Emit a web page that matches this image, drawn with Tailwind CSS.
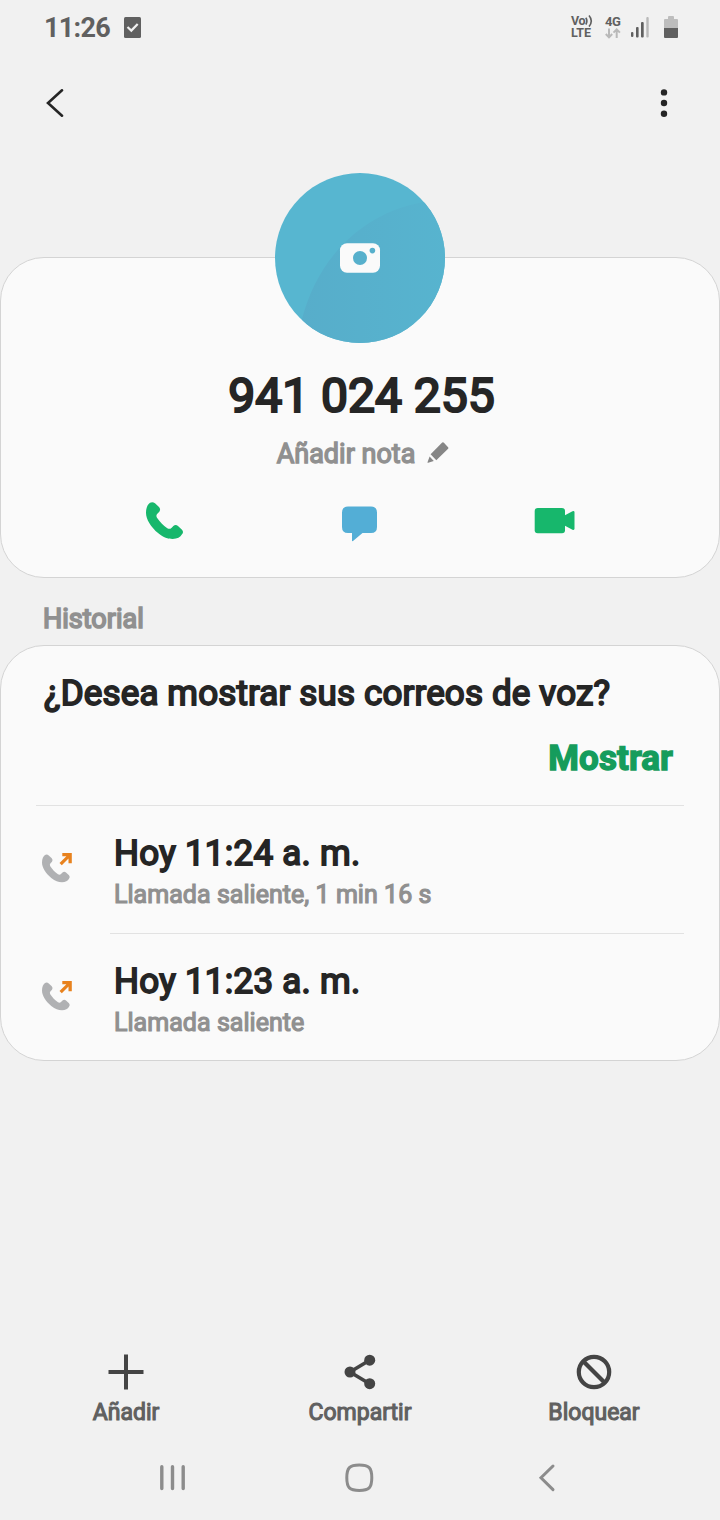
<!DOCTYPE html>
<html lang="es">
<head>
    <meta charset="UTF-8">
    <meta name="viewport" content="width=device-width, initial-scale=1.0">
    <title>Contacto</title>
    <!-- Tailwind CSS CDN -->
    <script src="https://cdn.jsdelivr.net/npm/@tailwindcss/browser@4"></script>
</head>
<body class="w-[720px] h-[1520px] overflow-hidden flex flex-col bg-[#f1f1f1] text-[#252525] font-['Roboto',sans-serif] whitespace-nowrap">
    <!-- Status bar -->
    <div class="h-14 shrink-0 flex items-center justify-between pl-11 pr-[42px] text-[#606060]">
        <div class="flex items-center gap-[14px]">
            <span class="text-[27px] leading-[54px] font-bold tracking-[-0.7px]">11:26</span>
            <svg class="w-[17px] h-[21px] -mt-[2px]" viewBox="0 0 17 21">
                <rect width="17" height="21" rx="1.5" fill="#606060"/>
                <path d="M3.5 10 7.3 13.6 13.7 7" fill="none" stroke="#f1f1f1" stroke-width="2.2"/>
            </svg>
        </div>
        <div class="flex items-center -mt-[2px]">
            <div class="w-[34px] flex flex-col text-[12.5px] leading-[12px] font-bold">
                <span class="flex items-center tracking-[-0.5px]">Vo<svg class="w-[8px] h-[12px]" viewBox="0 0 8 12" fill="none" stroke="#606060" stroke-width="1.6"><path d="M.8 2.800Q3 6 .8 9.500M4 .6Q8.600 6 4 11.600"/></svg></span>
                <span>LTE</span>
            </div>
            <div class="w-[26px] flex flex-col text-[13px] leading-[12px] font-bold">
                <span class="tracking-[-0.4px]">4G</span>
                <svg class="w-[16px] h-[11px]" viewBox="0 0 16 11" fill="none" stroke="#b9b9b9" stroke-width="2">
                    <path d="M4 .5V9M.8 6 4 9.4 7.2 6M11.7 10V1.5M8.5 4.6 11.7 1.4 14.9 4.6"/>
                </svg>
            </div>
            <svg class="w-[18px] h-[21px] mr-[15px]" viewBox="0 0 18 21">
                <rect y="15" width="2.4" height="5" rx="1" fill="#606060"/>
                <rect x="5" y="10" width="2.6" height="10.5" rx="1" fill="#606060"/>
                <rect x="10" y="5" width="2.7" height="15.5" rx="1" fill="#606060"/>
                <rect x="15.3" width="2.4" height="20.5" rx="1" fill="#b9b9b9"/>
            </svg>
            <svg class="w-[14px] h-[23px]" viewBox="0 0 14 23">
                <path d="M4 1q0-1 1-1h4q1 0 1 1v2h3q1 0 1 1v8H0V4q0-1 1-1h3z" fill="#bdbdbd"/>
                <path d="M0 12h14v9q0 1-1 1H1q-1 0-1-1z" fill="#606060"/>
            </svg>
        </div>
    </div>

    <!-- Toolbar -->
    <div class="h-[94px] shrink-0 flex items-center justify-between pl-[46px] pr-[52px]">
        <svg class="w-[18px] h-[28px]" viewBox="0 0 18 28"><path d="M16 1.3 2 14 16 26.7" fill="none" stroke="#252525" stroke-width="2.6" stroke-linecap="round"/></svg>
        <svg class="w-[8px] h-[28px]" viewBox="0 0 8 28" fill="#252525"><circle cx="4" cy="3.4" r="3.2"/><circle cx="4" cy="14" r="3.2"/><circle cx="4" cy="24.7" r="3.2"/></svg>
    </div>

    <!-- Contact card -->
    <section class="mt-[107px] h-[321px] shrink-0 flex flex-col items-center bg-[#fafafa] border border-[#d4d4d4] rounded-[44px]">
        <svg class="-mt-[85px] w-[170px] h-[170px] shrink-0" viewBox="0 0 170 170">
            <defs>
                <clipPath id="avatar"><circle cx="85" cy="85" r="85"/></clipPath>
                <linearGradient id="shade"><stop offset="0" stop-color="#57adca"/><stop offset="1" stop-color="#57b4cf"/></linearGradient>
            </defs>
            <g clip-path="url(#avatar)">
                <rect width="170" height="170" fill="#57b6d0"/>
                <path d="M27 146C42 88 84 42 144 30L175 24V175H20Z" fill="url(#shade)"/>
            </g>
            <rect x="65" y="70.3" width="40" height="29.5" rx="7" fill="#fafafa"/>
            <circle cx="85" cy="85" r="7" fill="#57b0cc"/>
            <circle cx="97.4" cy="77.6" r="2.8" fill="#57b0cc"/>
        </svg>
        <h1 class="mt-[25px] pl-[3px] text-[48px] leading-[56px] font-normal [-webkit-text-stroke:2.2px_#252525]">941 024 255</h1>
        <div class="mt-[11px] h-9 flex items-center gap-3 pl-[6px] text-[27px] text-[#909090] [-webkit-text-stroke:1.4px_#909090]">
            <span class="pt-[2px]">Añadir nota</span>
            <svg class="w-[22px] h-[22px] stroke-0" viewBox="0 0 22 22" fill="#868686"><path d="M15.2.6q.9-.7 1.700.1l4.200 4.500q.7.8 0 1.500L9.300 18.200 3.600 12.200ZM2.600 14.500 6.800 19 1.200 20.800Q.2 21 .6 20Z"/></svg>
        </div>
        <div class="mt-[31px] w-full flex pl-[145px]">
            <svg class="w-[37px] h-[37px]" viewBox="0 0 111 111" fill="#17b76c"><path id="handset" d="M0 32C0 17 5 7 12 2Q20-2 27 4L39 15Q45 21 40 29L34 35Q29 40 33 47C42 60 51 70 64 79Q71 83 77 77L82 72Q89 66 96 72L108 83Q114 90 108 97C103 106 94 111 80 111C65 111 53 107 37 94C14 74 0 52 0 32Z"/></svg>
            <svg class="ml-[159px] mt-[4px] w-[35px] h-[36px]" viewBox="0 0 35 36" fill="#53aed6"><path d="M6 .5H29Q35 .5 35 6.500V21Q35 27 29 27H20.500L11 35Q10 35.500 10 34.500V27H6Q0 27 0 21V6.500Q0 .5 6 .5Z"/></svg>
            <svg class="ml-[157px] mt-[5px] w-[41px] h-[27px]" viewBox="0 0 41 27" fill="#17b76c"><rect x=".7" y="1" width="30.3" height="25.2" rx="3"/><path d="M30.500 8.500 38.500 4.200Q40.500 3.500 40.500 5.500V21.500Q40.500 23.500 38.500 22.800L30.500 18.500Z"/></svg>
        </div>
    </section>

    <h2 class="h-[67px] shrink-0 pl-[43px] pt-[23px] text-[27px] leading-9 text-[#909090] font-normal [-webkit-text-stroke:1.7px_#909090]">Historial</h2>

    <!-- Call history -->
    <section class="h-[416px] shrink-0 flex flex-col bg-[#fafafa] border border-[#d4d4d4] rounded-[44px]">
        <div class="h-40 shrink-0 mx-[35px] pl-[7px] pr-[11px] flex flex-col border-b border-[#e2e2e2]">
            <p class="mt-[28px] pl-[1px] text-[35px] leading-10 tracking-[0.13px] [-webkit-text-stroke:1.8px_#252525]">¿Desea mostrar sus correos de voz?</p>
            <button class="mt-[25px] self-end text-[35px] leading-10 font-bold text-[#159c5c] tracking-[0.1px] [-webkit-text-stroke:1.4px_#159c5c]">Mostrar</button>
        </div>
        <div class="h-32 shrink-0 flex">
            <svg class="ml-[41px] mt-[47px] w-[31px] h-[30px]" viewBox="0 0 31 30"><use href="#handset" transform="translate(0 1.5) scale(.25)" fill="#b0b1b3"/><path d="M20.300 0H29.800V10.300H26.500V5.600L19.800 12.300 17.500 10 24.400 3.300H20.300Z" fill="#e8821e"/></svg>
            <div class="ml-[37px] mr-[35px] pl-[4px] flex-1 flex flex-col border-b border-[#e2e2e2]">
                <span class="mt-[28px] text-[35px] leading-10 tracking-[0.25px] [-webkit-text-stroke:1.8px_#252525]">Hoy 11:24 a. m.</span>
                <span class="mt-[6px] text-[25px] leading-[30px] tracking-[0.04px] text-[#909090] [-webkit-text-stroke:1.2px_#909090]">Llamada saliente, 1 min 16 s</span>
            </div>
        </div>
        <div class="h-[126px] shrink-0 flex">
            <svg class="ml-[41px] mt-[47px] w-[31px] h-[30px]" viewBox="0 0 31 30"><use href="#handset" transform="translate(0 1.5) scale(.25)" fill="#b0b1b3"/><path d="M20.300 0H29.800V10.300H26.500V5.600L19.800 12.300 17.500 10 24.400 3.300H20.300Z" fill="#e8821e"/></svg>
            <div class="ml-[37px] pl-[4px] flex flex-col">
                <span class="mt-[28px] text-[35px] leading-10 tracking-[0.25px] [-webkit-text-stroke:1.8px_#252525]">Hoy 11:23 a. m.</span>
                <span class="mt-[6px] text-[25px] leading-[30px] tracking-[0.04px] text-[#909090] [-webkit-text-stroke:1.2px_#909090]">Llamada saliente</span>
            </div>
        </div>
    </section>

    <!-- Bottom actions -->
    <div class="mt-[293px] px-[9px] shrink-0 grid grid-cols-3 text-[23px] leading-[30px] text-[#606060] [-webkit-text-stroke:1.1px_#606060]">
        <div class="flex flex-col items-center">
            <svg class="w-9 h-9 stroke-0" viewBox="0 0 36 36" fill="#444"><path d="M16 .5h4V16h15.500v4H20v15.500h-4V20H.5v-4H16z"/></svg>
            <span class="mt-[8px]">Añadir</span>
        </div>
        <div class="flex flex-col items-center">
            <svg class="w-9 h-9" viewBox="0 0 36 36" fill="#444"><path d="M28 6 8 18 28 30" fill="none" stroke="#444" stroke-width="3.6"/><circle cx="8" cy="18" r="5.5"/><circle cx="27.7" cy="6.2" r="5.5"/><circle cx="27.7" cy="29.7" r="5.5"/></svg>
            <span class="mt-[8px]">Compartir</span>
        </div>
        <div class="flex flex-col items-center">
            <svg class="w-9 h-9" viewBox="0 0 36 36" fill="none" stroke="#444" stroke-width="4.2"><circle cx="18" cy="18" r="15.2"/><path d="M7.500 7.500 28.500 28.500"/></svg>
            <span class="mt-[8px]">Bloquear</span>
        </div>
    </div>

    <!-- Navigation bar -->
    <div class="mt-[35px] shrink-0 flex items-center">
        <svg class="ml-[159px] w-[27px] h-[30px]" viewBox="0 0 27 30" stroke="#8c8c8c" stroke-width="3.4" stroke-linecap="round"><path d="M2.800 3.700V25.500M13.500 3.700V25.500M24.200 3.700V25.500"/></svg>
        <svg class="ml-[159px] w-[30px] h-[30px]" viewBox="0 0 30 30" fill="none" stroke="#8c8c8c" stroke-width="3"><path d="M14.300 2C24 2 26.800 4.800 26.800 14.800S24 27.500 14.300 27.500 1.800 24.800 1.800 14.800 4.600 2 14.300 2Z"/></svg>
        <svg class="ml-[163px] w-[18px] h-[30px]" viewBox="0 0 18 30" fill="none" stroke="#8c8c8c" stroke-width="3" stroke-linecap="round"><path d="M15 3 3 14.800 15 26.600"/></svg>
    </div>
</body>
</html>
